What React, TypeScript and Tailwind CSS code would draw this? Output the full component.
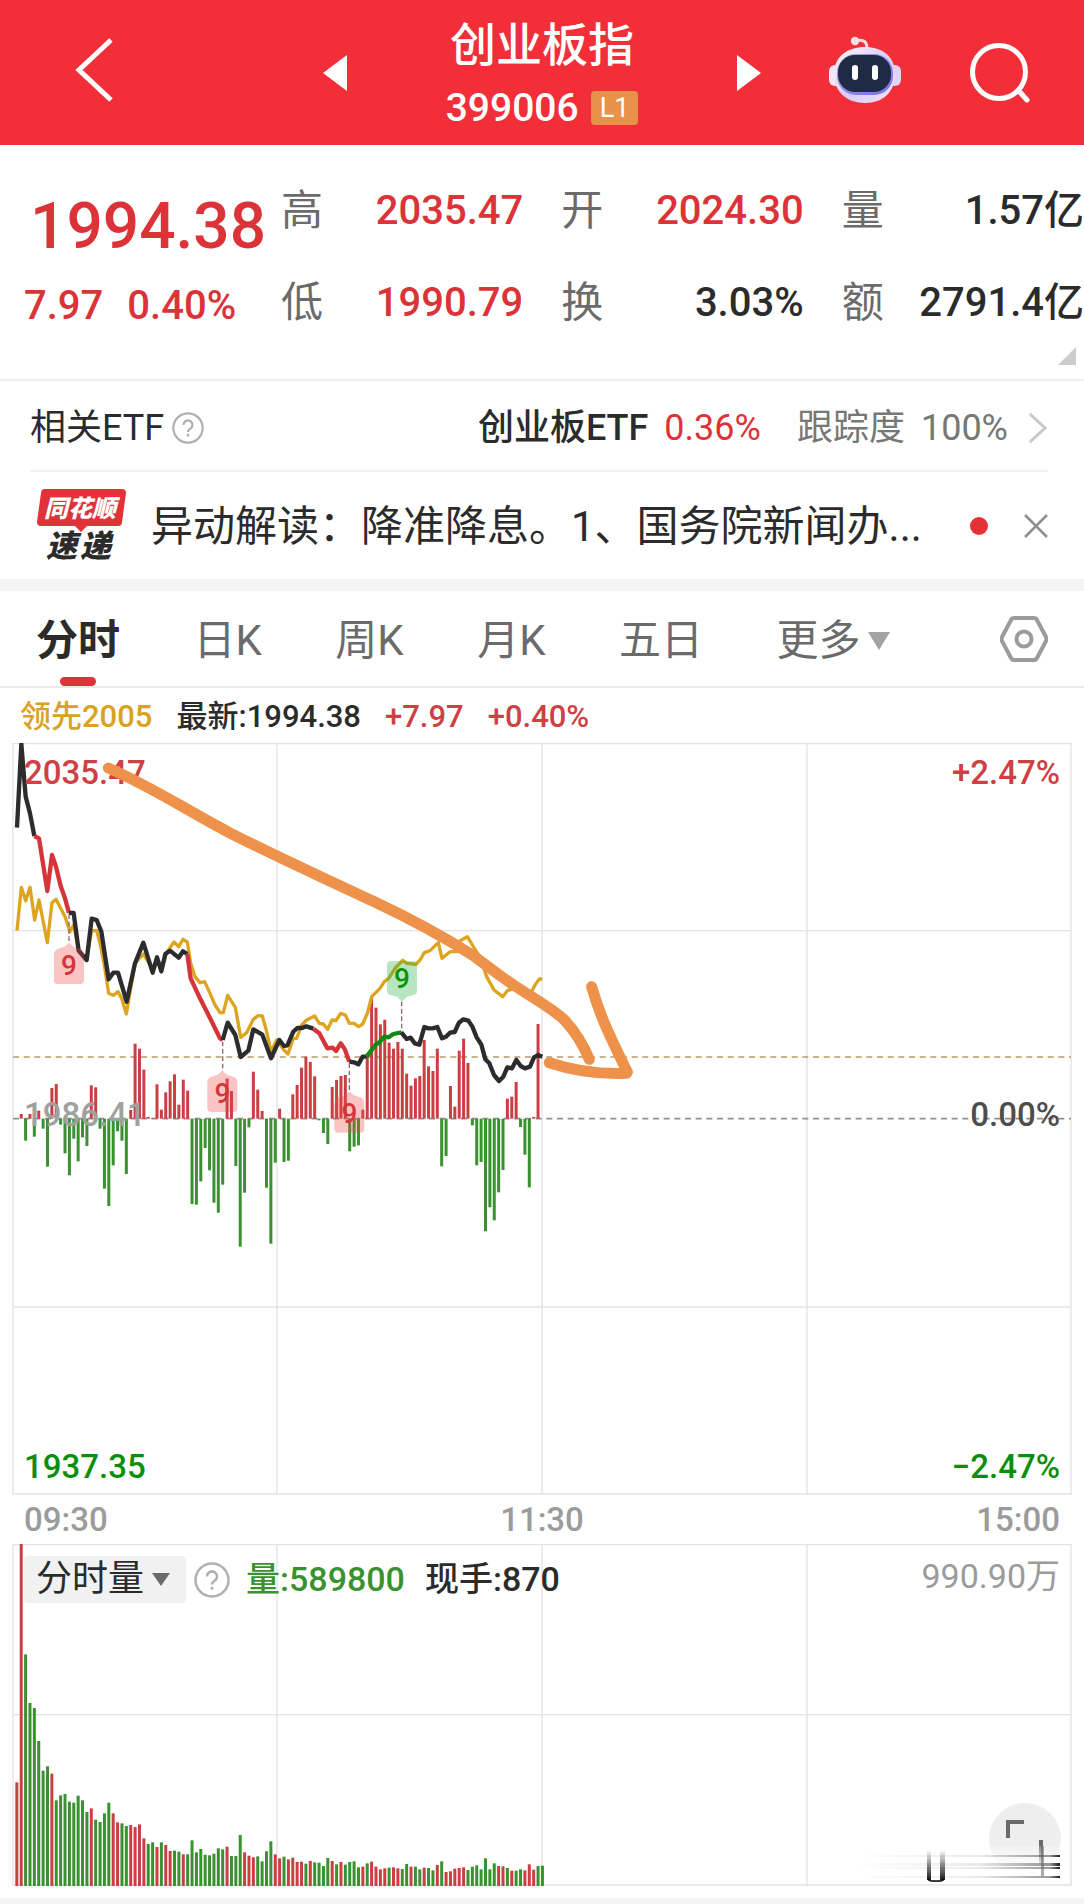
import { clsx } from "clsx";

type Tone = "up" | "plain";

const toneClass: Record<Tone, string> = {
  up: "text-[#dc3338]",
  plain: "text-[#2b2b2b]",
};

const RED = "#c93f44";
const GREEN = "#3a9130";
const GRID = "#e3e3e3";

// One value per trading minute, drawn above (buying) or below (selling) the zero line
const momentum = [
  0, 14, -66, 14, -54, 24, -30, -144, 92, 104, -18, -104, -170, -60, -128, -56, -82, 100, 94, -30,
  -210, -262, -140, -38, -66, -166, 26, 225, 210, 147, 5, 2, 103, 27, 79, 112, 133, 42, 117, 84,
  -256, -258, -188, -88, -155, -252, -282, -198, 120, 83, -142, -384, -222, -26, 141, 87, 23, -207, -375, -132,
  30, -130, -126, 73, 101, 153, 186, 170, 127, -5, -43, -76, 95, 116, 128, 131, -98, -84, -80, 27,
  195, 365, 333, 283, 297, 228, 210, 230, 210, 135, 99, 121, 128, 236, 157, 143, 210, -143, -112, 98,
  36, 204, 240, 167, -20, -140, -130, -338, -266, -305, -221, -154, 60, 66, 110, -25, -108, -206, 5, 284,
];

const volumes = [
  311, 1026, 695, 549, 534, 435, 346, 359, 337, 257, 272, 276, 253, 250, 271, 257, 222, 233, 199, 192,
  218, 250, 218, 191, 188, 180, 183, 177, 185, 143, 126, 131, 117, 131, 123, 105, 106, 103, 95, 95,
  137, 101, 111, 94, 92, 97, 113, 110, 118, 90, 90, 153, 101, 91, 86, 89, 74, 104, 134, 95,
  83, 88, 80, 85, 72, 73, 67, 75, 71, 70, 60, 84, 75, 65, 72, 64, 72, 74, 56, 58,
  68, 73, 58, 50, 53, 55, 56, 53, 51, 66, 58, 58, 50, 55, 54, 47, 63, 74, 42, 44,
  52, 54, 56, 48, 58, 62, 50, 83, 50, 68, 60, 59, 54, 46, 46, 50, 47, 65, 49, 60, 61,
];

const volumeTones =
  "rrggggggrggggggggrggggrrggrrrrggrgrrggrgggggggggrgggrrrggggrrgrrrrgrggggrgrgggg" +
  "rgrrrrgrrggrggrggrgrrrrrgggggggrrgrggrrrg";

const barX = (i: number) => 50 + i * 13.14;

const lineSegments = [
  { color: "#2c2c2e", points: "51,293 64,42 77,200 90,250 103,318" },
  {
    color: "#d5353a",
    points: "103,318 117,325 142,483 156,375 168,410 182,468 195,505 207,549",
  },
  {
    color: "#2c2c2e",
    points:
      "207,549 221,549 236,662 260,690 275,566 290,570 304,605 326,748 340,728 354,728 380,815 405,700 430,638 458,728 471,682 484,724 496,672 510,662 536,683 549,664 562,672",
  },
  { color: "#d5353a", points: "562,672 572,745 600,805 633,870 660,925 668,930" },
  {
    color: "#2c2c2e",
    points:
      "668,930 683,878 706,915 722,981 745,962 760,898 787,914 813,985 838,930 852,948 862,946 880,905 892,894 906,894 919,889 940,896",
  },
  {
    color: "#d5353a",
    points: "940,896 958,910 982,955 998,953 1008,963 1022,940 1034,957 1048,995",
  },
  { color: "#2c2c2e", points: "1048,995 1062,997 1075,1003 1088,980 1100,980" },
  {
    color: "#0f8a12",
    points: "1100,980 1126,945 1140,935 1153,920 1166,922 1180,912 1204,907",
  },
  {
    color: "#2c2c2e",
    points:
      "1204,907 1220,927 1232,923 1244,940 1258,944 1273,891 1285,895 1298,895 1312,891 1326,925 1338,920 1350,908 1364,906 1377,878 1390,868 1405,872 1417,890 1430,922 1444,944 1456,988 1468,1000 1482,1035 1497,1053 1510,1040 1522,1012 1536,1015 1549,990 1562,1008 1575,1015 1590,1010 1602,982 1614,975 1627,980",
  },
];

const leadLine =
  "51,602 64,472 77,512 90,472 104,570 117,510 142,638 156,518 168,508 182,535 195,560 210,605 221,585 236,662 260,688 275,602 290,602 300,640 312,700 326,790 340,796 354,785 365,805 379,852 405,700 430,672 458,718 471,690 484,718 500,668 522,636 536,650 549,628 562,636 572,700 585,740 600,758 614,755 630,790 645,825 660,848 670,848 683,796 706,832 722,922 740,908 760,868 774,857 787,858 800,905 813,965 830,930 852,960 864,972 880,925 890,925 905,885 920,870 944,858 958,880 970,882 983,898 996,870 1008,872 1022,850 1036,855 1048,880 1062,880 1076,890 1088,882 1102,850 1115,800 1140,775 1153,755 1166,745 1185,715 1208,691 1220,700 1248,703 1260,690 1273,668 1290,662 1315,638 1326,685 1338,675 1350,665 1370,665 1380,632 1402,620 1417,645 1440,682 1460,740 1482,780 1508,800 1522,782 1560,770 1590,795 1605,765 1618,747 1627,747";

function HelpIcon({ className }: { className?: string }) {
  return (
    <svg viewBox="0 0 36 36" className={className} fill="none" stroke="#b0b0b0" aria-hidden="true">
      <circle cx="18" cy="18" r="16.5" strokeWidth="2.5" />
      <path d="M13 14.5a5 5 0 1 1 7.6 4.2c-1.8 1.1-2.6 1.9-2.6 3.8" strokeWidth="2.5" />
      <circle cx="18" cy="26.2" r="0.8" strokeWidth="1.6" fill="#b0b0b0" />
    </svg>
  );
}

function RobotIcon() {
  return (
    <svg viewBox="0 0 72 68" className="h-[68px] w-[72px]" aria-hidden="true">
      <defs>
        <linearGradient id="shell" x1="0" y1="0" x2="1" y2="1">
          <stop offset="0" stopColor="#fff4f5" />
          <stop offset="0.55" stopColor="#d9cdf8" />
          <stop offset="1" stopColor="#f6e3f2" />
        </linearGradient>
        <linearGradient id="rim" x1="0" y1="0" x2="1" y2="1">
          <stop offset="0" stopColor="#9fa6d8" />
          <stop offset="1" stopColor="#7a6df0" />
        </linearGradient>
      </defs>
      <path d="M27 5c6-2 11 0 11 7" fill="none" stroke="#fbdfe2" strokeWidth="3" />
      <circle cx="26" cy="5" r="4.2" fill="#fbdfe2" />
      <rect x="0" y="29" width="12" height="21" rx="6" fill="#f3e6f6" />
      <rect x="60" y="29" width="12" height="21" rx="6" fill="#e0d5f7" />
      <path
        d="M36 11c17 0 30 9 30 27S54 67 36 67 5 56 5 38s14-27 31-27z"
        fill="url(#shell)"
      />
      <rect x="8" y="18" width="56" height="41" rx="19" fill="url(#rim)" />
      <rect x="9" y="19" width="53" height="37" rx="17" fill="#1f2a45" />
      <rect x="23" y="29" width="6" height="15" rx="3" fill="#fff" />
      <rect x="43" y="29" width="6" height="15" rx="3" fill="#fff" />
    </svg>
  );
}

function Header() {
  return (
    <header className="grid h-[145px] grid-cols-[1fr_438px_1fr] items-center bg-[#f22f38] text-white">
      <button aria-label="返回" className="ml-[70px] w-12 pb-1.5">
        <svg viewBox="0 0 48 68" className="h-[68px] w-12" fill="none" stroke="#fff" strokeWidth="5">
          <path d="M41 4 9 34l32 30" />
        </svg>
      </button>
      <div className="flex items-center justify-between">
        <button aria-label="上一个">
          <svg viewBox="0 0 24 36" className="h-9 w-6" fill="#fff">
            <path d="M24 0v36L0 18z" />
          </svg>
        </button>
        <div className="flex flex-col items-center pt-2">
          <h1 className="text-[46px] leading-[62px] font-medium">创业板指</h1>
          <div className="flex items-center gap-3">
            <span className="text-[39px] leading-[64px] font-medium">399006</span>
            <span className="rounded-sm bg-[#e8914b] px-[9px] text-[27px] leading-[34px]">L1</span>
          </div>
        </div>
        <button aria-label="下一个">
          <svg viewBox="0 0 24 36" className="h-9 w-6" fill="#fff">
            <path d="M0 0v36l24-18z" />
          </svg>
        </button>
      </div>
      <div className="flex items-center justify-between pr-[54px] pl-[68px]">
        <button aria-label="智能助手" className="pb-1.5">
          <RobotIcon />
        </button>
        <button aria-label="搜索">
          <svg viewBox="0 0 60 60" className="h-[60px] w-[60px]" fill="none" stroke="#fff" strokeWidth="5">
            <circle cx="29" cy="29" r="26.5" />
            <path d="M48 47l9 10" strokeLinecap="round" />
          </svg>
        </button>
      </div>
    </header>
  );
}

const quoteColumns: { label: string; value: string; tone: Tone }[][] = [
  [
    { label: "高", value: "2035.47", tone: "up" },
    { label: "低", value: "1990.79", tone: "up" },
  ],
  [
    { label: "开", value: "2024.30", tone: "up" },
    { label: "换", value: "3.03%", tone: "plain" },
  ],
  [
    { label: "量", value: "1.57亿", tone: "plain" },
    { label: "额", value: "2791.4亿", tone: "plain" },
  ],
];

function Quote() {
  return (
    <section className="relative flex h-[236px] border-b-2 border-[#efefef] pt-9">
      <div className="w-[281px] shrink-0 text-[#dc3338]">
        <p className="pl-[30px] text-[64px] leading-[92px] font-medium">1994.38</p>
        <p className="flex gap-6 pl-6 text-[40px] leading-[66px] font-medium">
          <span>7.97</span>
          <span>0.40%</span>
        </p>
      </div>
      <div className="grid flex-1 grid-cols-3 gap-[38px]">
        {quoteColumns.map((column, i) => (
          <dl key={i} className="leading-[60px]">
            {column.map((item) => (
              <div key={item.label} className="mb-8 flex items-center justify-between whitespace-nowrap">
                <dt className="text-[42px] text-[#6b6b6b]">{item.label}</dt>
                <dd className={clsx("text-[40px] font-medium", toneClass[item.tone])}>{item.value}</dd>
              </div>
            ))}
          </dl>
        ))}
      </div>
      <svg viewBox="0 0 18 18" className="absolute right-2 bottom-3.5 size-[18px]" fill="#cccccc">
        <path d="M18 0v18H0z" />
      </svg>
    </section>
  );
}

function RelatedEtf() {
  return (
    <section className="mr-9 ml-[30px] flex h-[91px] items-center border-b-2 border-[#f1f1f1] pt-1 text-[36px] text-[#2b2b2b]">
      <span>相关ETF</span>
      <button aria-label="相关ETF说明" className="ml-2">
        <HelpIcon className="size-8" />
      </button>
      <a href="#etf" className="ml-auto flex items-center">
        <span className="font-medium">创业板ETF</span>
        <span className="ml-4 text-[#dc3338]">0.36%</span>
        <span className="ml-9 text-[#777777]">跟踪度</span>
        <span className="ml-4 text-[#777777]">100%</span>
        <svg viewBox="0 0 20 32" className="ml-5 h-8 w-5" fill="none" stroke="#c8c8c8" strokeWidth="3">
          <path d="M2 2l15 14L2 30" />
        </svg>
      </a>
    </section>
  );
}

function NewsLogo() {
  return (
    <svg viewBox="0 0 90 80" className="h-20 w-[90px] shrink-0 overflow-visible" role="img" aria-label="同花顺速递">
      <path
        d="M8 3h77a4 4 0 0 1 4 4l-4 29a4 4 0 0 1-4 4H50l-6 6-6-6H4a4 4 0 0 1-4-4L4 7a4 4 0 0 1 4-4z"
        fill="#e03238"
      />
      <text x="43" y="31" textAnchor="middle" fontSize="24" fontWeight="900" fontStyle="italic" fill="#fff">
        同花顺
      </text>
      <text x="9" y="71" fontSize="31" fontWeight="900" fontStyle="italic" fill="#2b2b2b">
        速
      </text>
      <text x="43" y="71" fontSize="31" fontWeight="900" fontStyle="italic" fill="#2b2b2b">
        递
      </text>
    </svg>
  );
}

function News() {
  return (
    <section className="flex h-[107px] items-center pr-9 pl-[37px]">
      <NewsLogo />
      <a href="#news" className="ml-6 flex-1 pt-0.5 text-[42px] leading-[60px] whitespace-nowrap text-[#2b2b2b]">
        异动解读：降准降息。1、国务院新闻办...
      </a>
      <span className="size-[18px] shrink-0 rounded-full bg-[#e53136]" />
      <button aria-label="关闭" className="ml-9 shrink-0">
        <svg viewBox="0 0 24 24" className="size-6" fill="none" stroke="#8f8f8f" strokeWidth="2.5">
          <path d="M1 1l22 22M23 1L1 23" />
        </svg>
      </button>
    </section>
  );
}

const tabs = ["分时", "日K", "周K", "月K", "五日"];

function PeriodTabs() {
  return (
    <nav className="flex h-[97px] items-stretch justify-between border-b-2 border-[#e9e9e9] px-9 text-[42px] text-[#6b6b6b]">
      {tabs.map((tab, i) => (
        <button key={tab} className={clsx("relative pt-1", i === 0 && "font-bold text-[#2b2b2b]")}>
          {tab}
          {i === 0 && (
            <span className="absolute bottom-0 left-1/2 h-[9px] w-9 -translate-x-1/2 rounded-full bg-[#e03238]" />
          )}
        </button>
      ))}
      <button className="flex items-center gap-2 pt-1">
        更多
        <svg viewBox="0 0 22 18" className="h-[18px] w-[22px]" fill="#a3a3a3">
          <path d="M0 0h22L11 18z" />
        </svg>
      </button>
      <button aria-label="设置" className="ml-9">
        <svg viewBox="0 0 48 46" className="h-[46px] w-12" fill="none" stroke="#9b9b9b" strokeWidth="4">
          <path d="M14 2h20q2 0 3 2l9 17q1 2 0 4l-9 17q-1 2-3 2H14q-2 0-3-2L2 25q-1-2 0-4l9-17q1-2 3-2z" />
          <circle cx="24" cy="23" r="7.5" />
        </svg>
      </button>
    </nav>
  );
}

function Marker({ x, y, color, fill, flip }: { x: number; y: number; color: string; fill: string; flip?: boolean }) {
  const shape = flip
    ? "M-33-66h66q12 0 12 12v78q0 10-12 12L14 42 0 56-14 42-33 36q-12-2-12-12v-78q0-12 12-12z"
    : "M-33 60h66q12 0 12-12v-78q0-10-12-16L14-52 0-64-14-52l-19 6q-12 6-12 16v78q0 12 12 12z";
  return (
    <g transform={`translate(${x} ${y})`}>
      <path d={shape} fill={fill} fillOpacity="0.32" />
      <text y={flip ? 14 : 32} textAnchor="middle" fontSize="84" fontWeight="500" fill={color}>
        9
      </text>
    </g>
  );
}

function PriceChart() {
  return (
    <div className="relative mx-3 text-[33px] leading-10 font-medium">
      <svg viewBox="36 39 3180 2256" className="block h-auto w-full">
        <g stroke={GRID} strokeWidth="4" fill="none">
          <path d="M39 41H3213V2292H39z" />
          <path d="M831 41V2292M1626 41V2292M2421 41V2292M39 602H3213M39 1731H3213" />
        </g>
        <path d="M39 1166H3213" stroke="#8f8f8f" strokeWidth="5" strokeDasharray="18 14" />
        <path d="M39 981H3213" stroke="#b59a6a" strokeWidth="5" strokeDasharray="18 14" />
        {momentum.map((v, i) => (
          <rect
            key={i}
            x={barX(i) - 4}
            y={v > 0 ? 1166 - v : 1166}
            width="9"
            height={Math.abs(v)}
            fill={v > 0 ? RED : GREEN}
          />
        ))}
        <g fill="none" strokeLinejoin="round">
          <polyline points={leadLine} stroke="#dda51f" strokeWidth="10" />
          {lineSegments.map((segment) => (
            <polyline key={segment.points} points={segment.points} stroke={segment.color} strokeWidth="13" />
          ))}
        </g>
        <path
          d="M207 553V640M668 935V1024M1048 1000V1085M1205 815V905"
          stroke="#8a6a6a"
          strokeWidth="4"
          strokeDasharray="14 8"
        />
        <Marker x={207} y={702} color="#d5353a" fill="#f04848" />
        <Marker x={667} y={1086} color="#d5353a" fill="#f04848" />
        <Marker x={1048} y={1148} color="#d5353a" fill="#f04848" />
        <Marker x={1206} y={759} color="#0a960a" fill="#1fae3c" flip />
      </svg>
      <span className="absolute top-[10px] left-3 text-[#cf4045]">2035.47</span>
      <span className="absolute top-[10px] right-3 text-[#cf4045]">+2.47%</span>
      <span className="absolute top-1/2 left-3 -translate-y-6 text-[#a0a0a0]">1986.41</span>
      <span className="absolute top-1/2 right-3 -translate-y-6 text-[#4d4d4d]">0.00%</span>
      <span className="absolute bottom-2 left-3 text-[#0b8f0b]">1937.35</span>
      <span className="absolute right-3 bottom-2 text-[#0b8f0b]">−2.47%</span>
      <svg viewBox="36 39 3180 2256" className="absolute inset-0 h-auto w-full" aria-hidden="true">
        <g fill="none" stroke="#ee924b" strokeWidth="33" strokeLinecap="round" strokeLinejoin="round">
          <path d="M325 114C450 168 560 240 692 310C850 390 960 438 1120 514C1260 580 1340 626 1420 677L1480 722C1520 752 1555 775 1590 797C1640 828 1672 848 1695 872C1730 910 1750 945 1768 988" />
          <path d="M1648 998Q1760 1035 1880 1030" />
          <path d="M1775 770C1800 860 1835 930 1882 1026" />
        </g>
      </svg>
    </div>
  );
}

function VolumeChart() {
  return (
    <section className="relative mx-3 text-[34px] leading-[47px]">
      <svg viewBox="36 42 3180 1026" className="block h-auto w-full">
        <g stroke={GRID} strokeWidth="4" fill="none">
          <path d="M39 44H3213V1065H39z" />
          <path d="M831 44V1065M1626 44V1065M2421 44V1065M39 554H3213" />
        </g>
        {volumes.map((v, i) => (
          <rect
            key={i}
            x={barX(i) - 4}
            y={1068 - v}
            width="9"
            height={v}
            fill={volumeTones[i] === "r" ? RED : GREEN}
          />
        ))}
      </svg>
      <div className="absolute top-3 right-3 left-3 flex items-start">
        <button className="flex items-center gap-2 rounded bg-[#f1f1f1] pr-4 pl-3 text-[36px] text-[#2b2b2b]">
          分时量
          <svg viewBox="0 0 18 13" className="h-[13px] w-[18px]" fill="#6b6b6b">
            <path d="M0 0h18L9 13z" />
          </svg>
        </button>
        <button aria-label="分时量说明" className="mt-1.5 ml-2">
          <HelpIcon className="size-9" />
        </button>
        <span className="ml-4 font-medium text-[#3a9130]">量:589800</span>
        <span className="ml-5 font-medium text-[#2b2b2b]">现手:870</span>
        <span className="ml-auto leading-10 text-[#9b9b9b]">990.90万</span>
      </div>
      <button aria-label="全屏" className="absolute right-[11px] bottom-[11px] size-[72px] rounded-full bg-[#eeeeee]">
        <svg viewBox="0 0 72 72" className="size-[72px]" fill="none" stroke="#6a6a6a" strokeWidth="4">
          <path d="M19 35V19H35M52 37V60" />
        </svg>
      </button>
      <svg viewBox="0 0 204 36" className="absolute right-3 bottom-1 h-9 w-[204px]" aria-hidden="true">
        <defs>
          <linearGradient id="streak" x1="0" x2="1">
            <stop offset="0" stopColor="#000" stopOpacity="0" />
            <stop offset="0.6" stopColor="#000" stopOpacity="0.08" />
            <stop offset="0.95" stopColor="#000" stopOpacity="0.4" />
            <stop offset="1" stopColor="#000" stopOpacity="0.9" />
          </linearGradient>
          <linearGradient id="drop" x1="0" x2="0" y1="0" y2="1">
            <stop offset="0" stopColor="#000" stopOpacity="0" />
            <stop offset="1" stopColor="#000" stopOpacity="0.9" />
          </linearGradient>
          <linearGradient id="veil" x1="0" x2="0" y1="0" y2="1">
            <stop offset="0" stopColor="#fff" stopOpacity="0.2" />
            <stop offset="0.6" stopColor="#fff" stopOpacity="0.9" />
          </linearGradient>
        </defs>
        <rect x="130" width="74" height="36" fill="url(#veil)" />
        <rect y="9" width="204" height="2" fill="url(#streak)" />
        <rect y="17" width="204" height="3" fill="url(#streak)" />
        <rect y="21" width="204" height="2" fill="url(#streak)" />
        <rect y="30" width="204" height="2" fill="url(#streak)" />
        <rect x="71" y="4" width="4" height="30" fill="url(#drop)" />
        <rect x="84" y="4" width="5" height="30" fill="url(#drop)" />
        <path d="M72 33q1 2 3 2h10q2 0 3-2" fill="none" stroke="#000" strokeWidth="1.5" />
        <rect x="185" width="3" height="30" fill="#555" fillOpacity="0.5" />
      </svg>
    </section>
  );
}

export default function App() {
  return (
    <main className="w-full overflow-hidden bg-white font-['Roboto','Noto_Sans_CJK_SC',sans-serif]">
      <Header />
      <Quote />
      <RelatedEtf />
      <News />
      <div className="h-3 bg-[#f4f4f4]" />
      <PeriodTabs />
      <p className="flex h-[55px] items-center pt-1 pl-5 text-[31px] font-medium text-[#2b2b2b]">
        <span className="text-[#d9a223]">领先2005</span>
        <span className="ml-6">最新:1994.38</span>
        <span className="ml-6 text-[#cf4045]">+7.97</span>
        <span className="ml-6 text-[#cf4045]">+0.40%</span>
      </p>
      <PriceChart />
      <div className="grid h-[49px] grid-cols-3 items-center px-6 text-[33px] font-medium text-[#9b9b9b]">
        <span>09:30</span>
        <span className="text-center">11:30</span>
        <span className="text-right">15:00</span>
      </div>
      <VolumeChart />
      <div className="mt-3 h-[6px] bg-[#f4f4f4]" />
    </main>
  );
}
